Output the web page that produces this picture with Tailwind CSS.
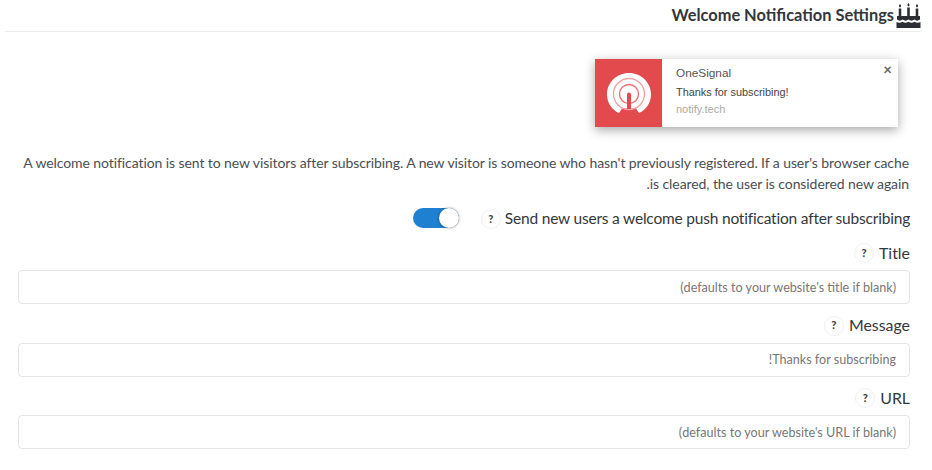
<!DOCTYPE html>
<html lang="en">
<head>
    <meta charset="UTF-8">
    <title>Welcome Notification Settings</title>
    <script src="https://cdn.jsdelivr.net/npm/@tailwindcss/browser@4"></script>
</head>
<body class="bg-white font-['Lato',sans-serif] text-[#3f4347] overflow-hidden">
    <div class="w-[932px] h-[470px] overflow-hidden">
        <!-- header -->
        <div class="ml-[5px] mr-[11px] h-[32px] border-b border-[#ececec] flex justify-end items-center">
            <h2 class="text-[16.4px] font-bold leading-none text-[#33373b]">Welcome Notification Settings</h2>
            <svg class="w-[25px] h-[25px] ml-[2px] mb-[1px]" viewBox="0 0 25 25" fill="#2b2f33">
                <path d="M4 1c1.300 1.400 1.500 2.500 0 3.500-1.500-1-1.300-2.100 0-3.500zM12.500 0c1.300 1.400 1.500 2.500 0 3.500-1.500-1-1.300-2.100 0-3.500zM21 1c1.300 1.400 1.500 2.500 0 3.500-1.500-1-1.300-2.100 0-3.500z"/>
                <path d="M2.700 5.500h2.600v8H2.700zM11.200 4.500h2.600v9h-2.600zM19.700 5.500h2.600v8h-2.600z"/>
                <path d="M1 13h23v3.500c-1.900 1.500-3.800 1.500-5.700 0-1.900 1.500-3.900 1.500-5.800 0-1.900 1.500-3.900 1.500-5.800 0-1.900 1.500-3.800 1.500-5.700 0z"/>
                <path d="M0.500 19c2.100 1 4.100 1 6 -.300 1.900 1.300 4 1.300 6 0 2 1.300 4.100 1.300 6 0 1.900 1.300 3.900 1.300 6 .300v6H0.500z"/>
            </svg>
        </div>

        <!-- notification preview -->
        <div class="flex justify-end mt-[27px] mr-[34px]">
            <div class="w-[303px] h-[68px] bg-white flex relative shadow-[0_3px_10px_rgba(0,0,0,0.35)]">
                <div class="w-[67px] h-full bg-[#e34a4d] flex items-center justify-center">
                    <svg class="w-[44px] h-[40px]" viewBox="0 0 44 40">
                        <path d="M12 40 C5 37 0 30 0 21.500 C0 9.500 9.800 0 22 0 S44 9.500 44 21.500 C44 30 39 37 32 40 L29 35.500 L15 35.500 Z" fill="#fff"/>
                        <circle cx="22" cy="21" r="15.500" fill="none" stroke="#f0a0a0" stroke-width="1.300"/>
                        <circle cx="22" cy="21" r="9.500" fill="none" stroke="#ea7476" stroke-width="1.400"/>
                        <path d="M20 36 V21.500 a2 2 0 0 1 4 0 V36 Z" fill="#e34a4d"/>
                    </svg>
                </div>
                <div class="pl-[14px] pt-[7px] font-['Liberation_Sans',sans-serif]">
                    <p class="text-[11.800px] leading-[14px] text-[#555]">OneSignal</p>
                    <p class="text-[10.900px] leading-[12px] mt-[6px] text-[#444]">Thanks for subscribing!</p>
                    <p class="text-[11px] leading-[12px] mt-[5px] text-[#aaa]">notify.tech</p>
                </div>
                <span class="absolute right-[6px] top-[3px] text-[15px] font-bold leading-[14px] text-[#666]">×</span>
            </div>
        </div>

        <!-- description -->
        <p dir="rtl" class="mt-[25px] ml-[22px] mr-[23px] text-[14px] leading-[21px] tracking-[-0.085px] text-[#4a4e52]">A welcome notification is sent to new visitors after subscribing. A new visitor is someone who hasn't previously registered. If a user's browser cache is cleared, the user is considered new again.</p>

        <!-- toggle row -->
        <div class="flex justify-end items-center mt-[12px] mr-[22px] h-[24px]">
            <div class="w-[46px] h-[20px] rounded-full bg-[#1f7fd1] relative mr-[22px]">
                <span class="absolute right-0 top-0 w-[20px] h-[20px] rounded-full bg-white shadow-[0_0_3px_rgba(0,0,0,0.4)]"></span>
            </div>
            <span class="w-[20px] h-[20px] mt-[2px] rounded-full border border-[#f0f0f0] flex items-center justify-center text-[11px] font-black text-[#444] mr-[4px]">?</span>
            <span class="text-[15.500px] leading-none tracking-[-0.2px] pt-[1px] text-[#33373b]">Send new users a welcome push notification after subscribing</span>
        </div>

        <!-- fields -->
        <div class="mt-[9px] ml-[18px] mr-[22px] flex flex-col gap-[7.500px]">
            <div>
                <div class="flex justify-end items-center h-[26px] mb-[5px]">
                    <span class="w-[20px] h-[20px] mt-[2px] rounded-full border border-[#f0f0f0] flex items-center justify-center text-[11px] font-black text-[#444] mr-[5px]">?</span>
                    <label class="text-[15.900px] leading-none pt-[1px] text-[#33373b]">Title</label>
                </div>
                <input dir="rtl" class="w-full h-[34px] border border-[#e4e4e4] rounded-[4px] px-[13px] text-[12.600px] placeholder:text-[#777]" placeholder="(defaults to your website's title if blank)">
            </div>
            <div>
                <div class="flex justify-end items-center h-[26px] mb-[5px]">
                    <span class="w-[20px] h-[20px] mt-[2px] rounded-full border border-[#f0f0f0] flex items-center justify-center text-[11px] font-black text-[#444] mr-[5px]">?</span>
                    <label class="text-[15.900px] leading-none pt-[1px] text-[#33373b]">Message</label>
                </div>
                <input dir="rtl" class="w-full h-[34px] border border-[#e4e4e4] rounded-[4px] px-[13px] text-[12.600px] placeholder:text-[#777]" placeholder="Thanks for subscribing!">
            </div>
            <div>
                <div class="flex justify-end items-center h-[26px] mb-[5px]">
                    <span class="w-[20px] h-[20px] mt-[2px] rounded-full border border-[#f0f0f0] flex items-center justify-center text-[11px] font-black text-[#444] mr-[5px]">?</span>
                    <label class="text-[15.900px] leading-none pt-[1px] text-[#33373b]">URL</label>
                </div>
                <input dir="rtl" class="w-full h-[34px] border border-[#e4e4e4] rounded-[4px] px-[13px] text-[12.600px] placeholder:text-[#777]" placeholder="(defaults to your website's URL if blank)">
            </div>
        </div>
    </div>
</body>
</html>
